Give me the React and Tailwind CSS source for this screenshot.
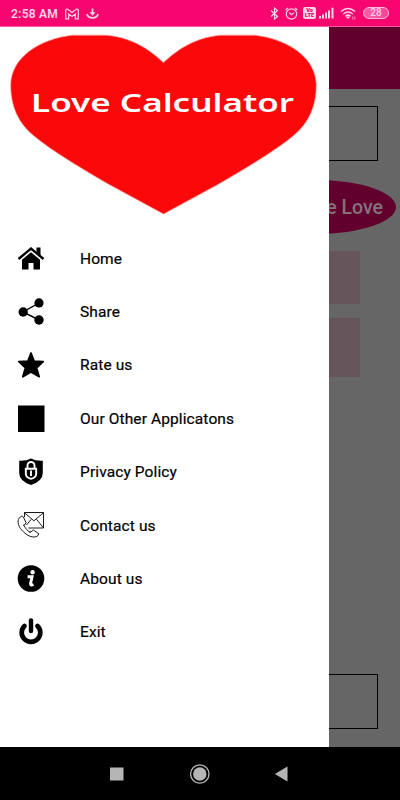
import { useState } from 'react';

function HomeIcon() {
  return (
    <svg width="28" height="28" viewBox="0 0 28 28">
      <path d="M19.500 2.500h4v9.500l-4-4z" />
      <path d="M1.500 14 14 3.500 26.500 14" fill="none" stroke="#000" strokeWidth="2.400" />
      <path d="M14 7.200 23 14.700V24.500h-6.500V18h-5v6.500H5v-9.800z" />
    </svg>
  );
}

function ShareIcon() {
  return (
    <svg width="28" height="28" viewBox="0 0 28 28">
      <path d="M22 5 6 14l16 8" fill="none" stroke="#000" strokeWidth="1.400" />
      <circle cx="22" cy="4.900" r="4.600" />
      <circle cx="6.200" cy="14" r="4.700" />
      <circle cx="22" cy="22" r="4.700" />
    </svg>
  );
}

function StarIcon() {
  return (
    <svg width="28" height="28" viewBox="0 0 28 28">
      <path
        d="M14 2 17.200 10.200 26.200 10.700 19.600 16.800 22.200 25.800 14 21 5.800 25.800 8.400 16.800 1.800 10.700 10.800 10.200z"
        stroke="#000"
        strokeWidth="1.700"
        strokeLinejoin="round"
      />
    </svg>
  );
}

function SquareIcon() {
  return (
    <svg width="28" height="28" viewBox="0 0 28 28">
      <rect x="1" y=".5" width="26.500" height="26.500" />
    </svg>
  );
}

function PrivacyIcon() {
  return (
    <svg width="28" height="28" viewBox="0 0 28 28">
      <path d="M14 .5q5 2.600 11.800 2.200v12.300q0 8-11.800 12Q2.200 23 2.200 15V2.700Q9 3.100 14 .5z" />
      <g fill="none" stroke="#fff" strokeWidth="1.900">
        <path d="M10.500 10.500V7.500a3.500 3.500 0 0 1 7 0v3" />
        <path d="M8.800 10.800h10.400v4.700a5.200 5.200 0 0 1-10.400 0z" />
        <path d="M14 12.500v5.500" strokeWidth="1.900" />
      </g>
    </svg>
  );
}

function ContactIcon() {
  return (
    <svg width="28" height="28" viewBox="0 0 28 28" fill="none" stroke="#000" strokeWidth=".9">
      <path d="M7.500 6V1.500h19v15.500H11.500" />
      <path d="m7.500 1.800 9.400 8 9.600-8M26.300 16.700l-6.800-8.400M14.200 8.300 9.500 14" />
      <path d="M4.500 5.300C.6 7-.3 12 3.500 17.500c4.500 6 10.500 9.500 15.500 8.300q2.300-.8 2.800-3L16.500 19l-3.200 2.300c-3-1.500-5-4-6.200-6.800l2-2.700L6.300 5.800q-.8-.9-1.800-.5z" />
      <path d="m6 14.500 1.400-.8m5.200 8 1.200-1.200" />
    </svg>
  );
}

function InfoIcon() {
  return (
    <svg width="28" height="28" viewBox="0 0 28 28">
      <circle cx="14" cy="13.500" r="13.300" />
      <circle cx="15.600" cy="7.200" r="2.200" fill="#fff" />
      <path d="M10.600 11.800h4.500l-1.600 7q-.3 2 3 .7" fill="none" stroke="#fff" strokeWidth="2.900" />
    </svg>
  );
}

function PowerIcon() {
  return (
    <svg width="28" height="28" viewBox="0 0 28 28" fill="none" stroke="#000" strokeLinecap="round">
      <path d="M14 2.500v10.500" strokeWidth="4.400" />
      <path d="M7.500 8a9.300 9.300 0 1 0 13 0" strokeWidth="4.700" />
    </svg>
  );
}

const menuItems = [
  { label: 'Home', icon: HomeIcon },
  { label: 'Share', icon: ShareIcon },
  { label: 'Rate us', icon: StarIcon },
  { label: 'Our Other Applicatons', icon: SquareIcon },
  { label: 'Privacy Policy', icon: PrivacyIcon },
  { label: 'Contact us', icon: ContactIcon },
  { label: 'About us', icon: InfoIcon },
  { label: 'Exit', icon: PowerIcon },
];

function StatusBar() {
  return (
    <div className="flex h-[27px] shrink-0 items-center border-b border-[#f95a9d] bg-[#f80670] px-[11px] text-[#ffd3e8]">
      <span className="mt-[2px] w-[54px] whitespace-nowrap text-[12px] font-semibold leading-none tracking-[0.25px]">2:58 AM</span>
      <svg className="mt-px" width="14" height="12" viewBox="0 0 14 12" fill="none" stroke="currentColor" strokeWidth="1.200">
        <path d="M.7 10.800V2.300Q1 .6 2.700 1.300L7 4.500l4.300-3.200q1.700-.7 2 1v8.500h-3V6L7 8.400 3.700 6v4.800z" />
      </svg>
      <svg className="ml-[7px] mt-px" width="13" height="12" viewBox="0 0 13 12" fill="none" stroke="currentColor" strokeWidth="1.700">
        <path d="M6.500.5v5" />
        <path d="M3.500 4.300h6l-3 3.400z" fill="currentColor" stroke="none" />
        <path d="M1 6a5.600 4.700 0 0 0 11 0" />
      </svg>

      <div className="ml-auto flex items-center">
        <svg width="9" height="13" viewBox="0 0 9 12" fill="none" stroke="currentColor" strokeWidth="1.200">
          <path d="m1 3 6.500 6-3 2.400V.6l3 2.400L1 9" />
        </svg>
        <svg className="ml-[6px]" width="13" height="13" viewBox="0 0 13 13" fill="none" stroke="currentColor" strokeWidth="1.200">
          <circle cx="6.500" cy="7" r="5.200" />
          <path d="m.6 3 2.400-2m9.400 2L10 1M4.300 5.800l2.200 1.800 2.400-2" />
        </svg>
        <div className="ml-[5px] flex h-[12px] w-[13px] flex-col items-center justify-center rounded-[2px] bg-[#ffd3e8] text-[5.500px] font-black leading-[5px] text-[#d80868]">
          <span>Vo</span>
          <span>LTE</span>
        </div>
        <svg className="ml-[2px]" width="17" height="12" viewBox="0 0 17 12" fill="currentColor">
          <path d="M1 9h2v2.500H1zM4 7.500h2v4H4zM7 5.500h2v6H7zM10 3.500h2v8h-2zM13.500.8h2v10.700h-2z" />
        </svg>
        <svg className="ml-[5px]" width="17" height="13" viewBox="0 0 17 13" fill="none" stroke="currentColor" strokeWidth="1.600">
          <path d="M1 4.500q7-6 14 0M3.300 7q4.700-4 9.400 0M5.500 9.300q2.500-2.200 5 0" />
          <path d="m8 12-1.800-1.800q1.800-1.400 3.600 0z" fill="currentColor" stroke="none" />
          <path d="M12.800 9.500v3M14.800 9.500v3" strokeWidth=".7" />
        </svg>
        <div className="ml-[6px] flex h-[12px] w-[26px] items-center justify-center rounded-full border border-[#ffc0de] bg-linear-to-r from-[#fa5ba3] from-30% to-[#fa3f90] text-[10px] font-medium leading-none">
          28
        </div>
      </div>
    </div>
  );
}

// Calculator screen, dimmed behind the open drawer
function CalculatorScreen() {
  return (
    <div className="flex h-full flex-col bg-[#666]">
      <div className="h-[62px] shrink-0 bg-[#62002d]" />
      <div className="ml-[23px] mt-[17px] h-[55px] w-[355px] shrink-0 border border-black" />
      <button className="ml-[236px] mt-[19px] flex h-[54px] w-[160px] shrink-0 items-center justify-end whitespace-nowrap rounded-[50%] bg-[#62002d] pr-[13px] pt-[2px] text-[19.500px] font-medium text-[#85727c]">
        Calculate Love
      </button>
      <div className="ml-[40px] mt-[17px] h-[53px] w-[320px] shrink-0 bg-[#66555b]" />
      <div className="ml-[40px] mt-[14px] h-[59px] w-[320px] shrink-0 bg-[#66555b]" />
      <div className="mb-[18px] ml-[23px] mt-auto h-[55px] w-[355px] shrink-0 border border-black" />
    </div>
  );
}

function HeartBanner() {
  return (
    <svg className="block shrink-0" width="329" height="205" viewBox="0 27 329 205">
      <path
        d="M163.500 62.500C151 51 134 38 107 35.200H72C40 39 11 57 10.700 85C10.700 106 18 123 34 136C52 151 84 170 110 185L163.500 214L217 185C243 170 275 151 293 136C309 123 316.300 106 316.300 85C316 57 287 39 255 35.200H220C193 38 176 51 163.500 62.500z"
        fill="#fa080a"
        stroke="#ff9c96"
        strokeWidth=".7"
      />
      <text
        x="31"
        y="112"
        textLength="263"
        lengthAdjust="spacingAndGlyphs"
        fill="#fff"
        fontSize="25"
        fontWeight="600"
        fontFamily="'Noto Sans', 'Open Sans', sans-serif"
      >
        Love Calculator
      </text>
    </svg>
  );
}

function Drawer({ onSelect }) {
  return (
    <nav className="absolute inset-y-0 left-0 flex w-[329px] flex-col bg-white">
      <HeartBanner />
      <ul>
        {menuItems.map(({ label, icon: Icon }) => (
          <li key={label}>
            <button
              onClick={() => onSelect(label)}
              className="flex h-[53.35px] w-full items-center pl-[17px] text-left text-[15.5px] tracking-[0.11px] text-black [-webkit-text-stroke:0.2px_black]"
            >
              <Icon />
              <span className="ml-[35px] pt-[1.5px]">{label}</span>
            </button>
          </li>
        ))}
      </ul>
    </nav>
  );
}

function NavigationBar() {
  return (
    <div className="flex h-[53px] shrink-0 items-center justify-center bg-black text-[#b5b5b5]">
      <svg width="180" height="22" viewBox="0 0 180 22" fill="currentColor">
        <rect x="0" y="4.500" width="13.500" height="13" />
        <circle cx="89.800" cy="11" r="6.700" />
        <circle cx="89.800" cy="11" r="9.200" fill="none" stroke="currentColor" strokeWidth="1.300" />
        <path d="M164.800 11 177.500 3.500v15z" />
      </svg>
    </div>
  );
}

export default function App() {
  const [, setSelected] = useState('Home');

  return (
    <div className="flex h-[800px] w-[400px] flex-col overflow-hidden font-[Roboto,sans-serif]">
      <StatusBar />
      <main className="relative h-[720px] shrink-0">
        <CalculatorScreen />
        <Drawer onSelect={setSelected} />
      </main>
      <NavigationBar />
    </div>
  );
}
